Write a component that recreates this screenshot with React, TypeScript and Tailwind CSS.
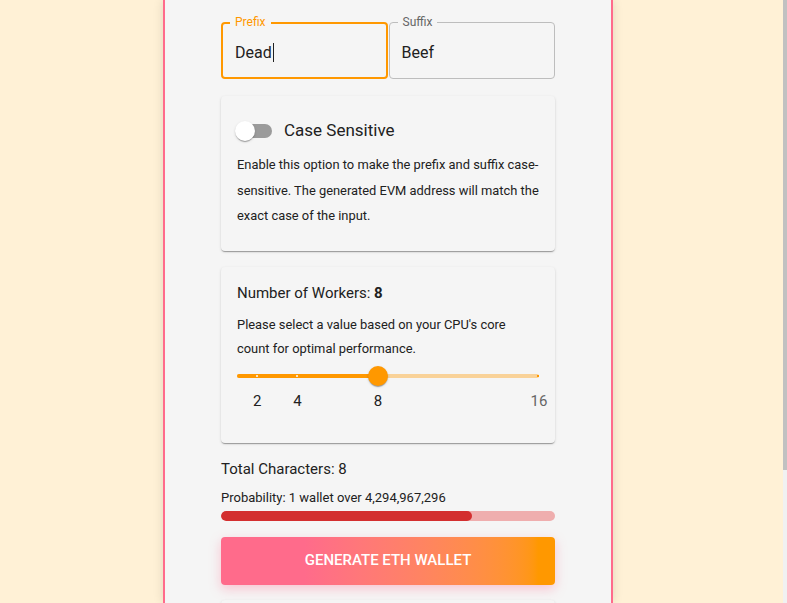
import React from "react";

const paperShadow =
  "shadow-[0px_2px_1px_-1px_rgba(0,0,0,0.2),0px_1px_1px_0px_rgba(0,0,0,0.14),0px_1px_3px_0px_rgba(0,0,0,0.12)]";

const MIN = 1;
const MAX = 16;
const VALUE = 8;
const marks = [2, 4, 8, 16];

const pct = (v: number) => ((v - MIN) / (MAX - MIN)) * 100;

function OutlinedField({ label, value, focused }: { label: string; value: string; focused?: boolean }) {
  return (
    <div
      className={
        focused
          ? "relative h-[57px] rounded-[4px] border-2 border-[#ff9800] pl-[12px] pt-[3px] flex items-center"
          : "relative h-[57px] rounded-[4px] border border-[#bdbdbd] pl-[12px] pt-[3px] flex items-center"
      }
    >
      <span
        className={
          focused
            ? "absolute -top-[10px] left-[7px] px-[5px] bg-[#f5f5f5] text-[12px] leading-[16px] text-[#ff9800]"
            : "absolute -top-[9px] left-[8px] px-[5px] bg-[#f5f5f5] text-[12px] leading-[16px] text-[#666666]"
        }
      >
        {label}
      </span>
      <span className="text-[16px] leading-[23px] text-[#212121]">{value}</span>
      {focused && <span className="w-px h-[19px] bg-[#212121] ml-[1px]" />}
    </div>
  );
}

function CaseCard() {
  return (
    <div className={`mt-[17px] rounded-[4px] bg-[#f5f5f5] pl-4 pr-3 pt-4 pb-[22px] ${paperShadow}`}>
      <div className="flex items-center h-[38px]">
        <span className="relative w-[37px] h-[20px] -ml-[2px] shrink-0">
          <span className="absolute left-[3px] top-[3px] w-[34px] h-[14px] rounded-full bg-[#9b9b9b]" />
          <span className="absolute left-0 top-0 w-[20px] h-[20px] rounded-full bg-white shadow-[0px_2px_1px_-1px_rgba(0,0,0,0.2),0px_1px_1px_0px_rgba(0,0,0,0.14),0px_1px_3px_0px_rgba(0,0,0,0.12)]" />
        </span>
        <span className="ml-[12px] text-[17px] text-[#212121]">Case Sensitive</span>
      </div>
      <p className="mt-[2px] text-[12.9px] leading-[25.5px] text-[#212121]">
        Enable this option to make the prefix and suffix case-sensitive. The generated EVM address will match the
        exact case of the input.
      </p>
    </div>
  );
}

function WorkersCard() {
  return (
    <div className={`mt-4 rounded-[4px] bg-[#f5f5f5] px-4 pt-4 pb-[32px] ${paperShadow}`}>
      <div className="text-[15px] leading-[20px] text-[#212121]">
        Number of Workers: <span className="font-bold">{VALUE}</span>
      </div>
      <p className="mt-[10px] text-[12.9px] leading-[24px] text-[#212121]">
        Please select a value based on your CPU's core count for optimal performance.
      </p>
      <div className="relative mt-[5px] h-[20px]">
        <div className="absolute left-0 right-0 top-[8px] h-[4px] rounded-full bg-[#f9d298]" />
        <div
          className="absolute left-0 top-[8px] h-[4px] rounded-full bg-[#ff9800]"
          style={{ width: `${pct(VALUE)}%` }}
        />
        {marks.map((m) => (
          <span
            key={m}
            className={
              m <= VALUE
                ? "absolute top-[9px] w-[2px] h-[2px] -ml-[1px] bg-[#fbe3c0]"
                : "absolute top-[9px] w-[2px] h-[2px] -ml-[2px] bg-[#ff9800]"
            }
            style={{ left: `${pct(m)}%` }}
          />
        ))}
        <span
          className="absolute top-0 w-[20px] h-[20px] -ml-[10px] rounded-full bg-[#ff9800] shadow-[0px_2px_1px_-1px_rgba(0,0,0,0.2),0px_1px_1px_0px_rgba(0,0,0,0.14),0px_1px_3px_0px_rgba(0,0,0,0.12)]"
          style={{ left: `${pct(VALUE)}%` }}
        />
      </div>
      <div className="relative mt-[5px] h-[20px]">
        {marks.map((m) => (
          <span
            key={m}
            className={
              m <= VALUE
                ? "absolute top-0 -translate-x-1/2 text-[15px] leading-[20px] text-[#212121]"
                : "absolute top-0 -translate-x-1/2 text-[15px] leading-[20px] text-[#666666]"
            }
            style={{ left: `${pct(m)}%` }}
          >
            {m}
          </span>
        ))}
      </div>
    </div>
  );
}

export default function App() {
  const probability = 75;

  return (
    <div className="flex h-screen overflow-hidden bg-[#fff1d6] font-['Roboto',sans-serif]">
      <main className="flex-1 flex overflow-hidden">
        <div className="ml-[163px] w-[450px] border-x-2 border-[#ff6b8b] bg-[#f5f5f5] shadow-[0_0_10px_rgba(0,0,0,0.12)] px-[56px] pt-[22px] pb-8">
          <div className="grid grid-cols-2 gap-px">
            <OutlinedField label="Prefix" value="Dead" focused />
            <OutlinedField label="Suffix" value="Beef" />
          </div>

          <CaseCard />
          <WorkersCard />

          <div className="mt-[16px] text-[15px] leading-[20px] text-[#212121]">Total Characters: 8</div>
          <div className="mt-[10px] text-[13px] leading-[18px] text-[#212121]">
            Probability: 1 wallet over 4,294,967,296
          </div>
          <div className="mt-[4px] h-[10px] rounded-full bg-[#efaeae] overflow-hidden">
            <div className="h-full rounded-full bg-[#d32f2f]" style={{ width: `${probability}%` }} />
          </div>

          <button className="mt-[16px] w-full h-[48px] rounded-[4px] bg-gradient-to-r from-[#ff6b8b] from-25% to-[#ff9800] to-95% text-white text-[15px] font-medium uppercase shadow-[0_4px_12px_rgba(255,107,139,0.35)]">
            Generate ETH Wallet
          </button>

          <div className={`mt-[15px] h-[120px] rounded-[4px] bg-[#f5f5f5] ${paperShadow}`} />
        </div>
      </main>
      <aside className="w-[4px] shrink-0 bg-[#f1f1f1] flex flex-col">
        <div className="h-[470px] bg-[#c1c1c1]" />
      </aside>
    </div>
  );
}
